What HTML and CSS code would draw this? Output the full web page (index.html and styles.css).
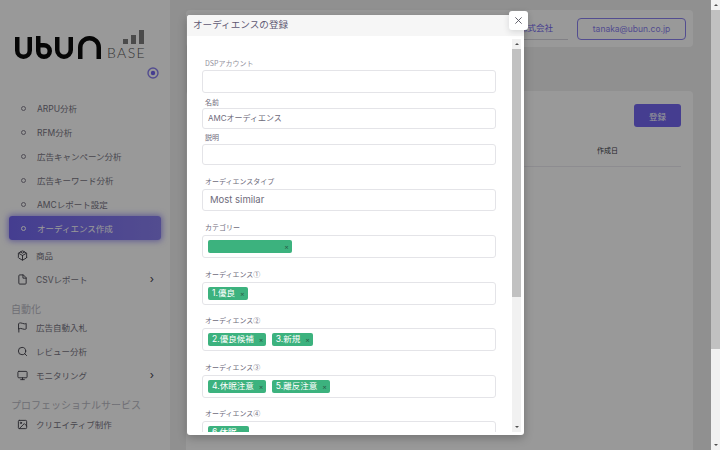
FILE: index.html
```html
<!DOCTYPE html>
<html lang="ja">
<head>
<meta charset="utf-8">
<title>オーディエンスの登録</title>
<link rel="stylesheet" href="styles.css">
</head>
<body>
<div class="page">
  <aside class="sidebar">
    <div class="brand">
      <svg class="logo" width="150" height="64" viewBox="0 0 150 64" aria-label="UBUN BASE">
        <g fill="none" stroke="#0a0a0a" stroke-width="4.500" stroke-linecap="butt">
          <path d="M17.250 37V50.500a6.250 6.250 0 0 0 12.500 0V37"/>
          <path d="M38.250 36V51a5.750 5.750 0 0 0 11.500 0a5.750 5.750 0 0 0-5.750-5.750H40"/>
          <path d="M57.250 37V50a6.750 6.750 0 0 0 13.500 0V37"/>
          <path d="M80.250 59V47.500a9.250 9.250 0 0 1 18.500 0V59"/>
        </g>
        <rect x="123" y="39" width="5" height="5" fill="#7d7d7d"/>
        <rect x="131" y="35" width="5" height="9" fill="#7d7d7d"/>
        <rect x="139" y="30" width="5" height="14" fill="#7d7d7d"/>
      </svg>
      <span class="base">BASE</span>
      <svg class="target" width="12" height="12" viewBox="0 0 12 12">
        <circle cx="6" cy="6" r="5" fill="none" stroke="#8a80f0" stroke-width="1.400"/>
        <circle cx="6" cy="6" r="2.200" fill="#7367f0"/>
      </svg>
    </div>
    <nav class="nav">
      <a class="item sub"><i class="dot"></i>ARPU分析</a>
      <a class="item sub"><i class="dot"></i>RFM分析</a>
      <a class="item sub"><i class="dot"></i>広告キャンペーン分析</a>
      <a class="item sub"><i class="dot"></i>広告キーワード分析</a>
      <a class="item sub"><i class="dot"></i>AMCレポート設定</a>
      <a class="item sub active"><i class="dot"></i>オーディエンス作成</a>
      <a class="item top">
        <svg class="ico" viewBox="0 0 24 24"><path d="M21 16V8a2 2 0 0 0-1-1.730l-7-4a2 2 0 0 0-2 0l-7 4A2 2 0 0 0 3 8v8a2 2 0 0 0 1 1.730l7 4a2 2 0 0 0 2 0l7-4A2 2 0 0 0 21 16z"/><path d="M7.500 4.200 12 7l4.500-2.800M3.300 7 12 12l8.700-5M12 22V12"/></svg>
        商品</a>
      <a class="item">
        <svg class="ico" viewBox="0 0 24 24"><path d="M13 2H6a2 2 0 0 0-2 2v16a2 2 0 0 0 2 2h12a2 2 0 0 0 2-2V9z"/><path d="M13 2v7h7"/></svg>
        CSVレポート<span class="chev">›</span></a>
      <div class="section">自動化</div>
      <a class="item">
        <svg class="ico" viewBox="0 0 24 24"><path d="M4 15s1-1 4-1 5 2 8 2 4-1 4-1V3s-1 1-4 1-5-2-8-2-4 1-4 1zM4 22v-7"/></svg>
        広告自動入札</a>
      <a class="item">
        <svg class="ico" viewBox="0 0 24 24"><circle cx="11" cy="11" r="8"/><path d="m21 21-4.300-4.300"/></svg>
        レビュー分析</a>
      <a class="item">
        <svg class="ico" viewBox="0 0 24 24"><rect x="2" y="3" width="20" height="14" rx="2"/><path d="M8 21h8M12 17v4"/></svg>
        モニタリング<span class="chev">›</span></a>
      <div class="section pro">プロフェッショナルサービス</div>
      <a class="item">
        <svg class="ico" viewBox="0 0 24 24"><rect x="3" y="3" width="18" height="18" rx="2"/><circle cx="8.500" cy="8.500" r="1.500"/><path d="m21 15-5-5L5 21"/></svg>
        クリエイティブ制作</a>
    </nav>
  </aside>
  <main class="main">
    <header class="topbar">
      <div class="company">UBUN株式会社</div>
      <div class="email">tanaka@ubun.co.jp</div>
    </header>
    <section class="card">
      <div class="card-actions"><button class="primary">登録</button></div>
      <div class="thead"><span>作成日</span></div>
    </section>
  </main>
  <div class="scrollbar page-bar">
    <span class="arrow up"></span>
    <span class="thumb"></span>
    <span class="rest"></span>
    <span class="arrow down"></span>
  </div>
</div>
<div class="overlay"></div>
<div class="modal">
  <button class="close" aria-label="閉じる">
    <svg width="9" height="9" viewBox="0 0 10 10"><path d="M1.500 1.500l7 7M8.500 1.500l-7 7" stroke="#55535f" stroke-width="1" fill="none"/></svg>
  </button>
  <div class="modal-head">オーディエンスの登録</div>
  <div class="modal-body">
    <form class="form">
      <div class="field field-a"><label>DSPアカウント</label><div class="box"></div></div>
      <div class="field field-b"><label>名前</label><div class="box">AMCオーディエンス</div></div>
      <div class="field field-c"><label>説明</label><div class="box"></div></div>
      <div class="field field-d"><label>オーディエンスタイプ</label><div class="box big">Most similar</div></div>
      <div class="field"><label>カテゴリー</label><div class="box chips"><span class="chip wide"><b></b><em>×</em></span></div></div>
      <div class="field"><label>オーディエンス①</label><div class="box chips"><span class="chip"><b>1.優良</b><em>×</em></span></div></div>
      <div class="field"><label>オーディエンス②</label><div class="box chips"><span class="chip"><b>2.優良候補</b><em>×</em></span><span class="chip"><b>3.新規</b><em>×</em></span></div></div>
      <div class="field"><label>オーディエンス③</label><div class="box chips"><span class="chip"><b>4.休眠注意</b><em>×</em></span><span class="chip"><b>5.離反注意</b><em>×</em></span></div></div>
      <div class="field"><label>オーディエンス④</label><div class="box chips"><span class="chip"><b>6.休眠</b><em>×</em></span></div></div>
    </form>
    <div class="scrollbar modal-bar">
      <span class="arrow up"></span>
      <span class="thumb"></span>
      <span class="rest"></span>
      <span class="arrow down"></span>
    </div>
  </div>
</div>
</body>
</html>
```
FILE: styles.css
```css
* { box-sizing: border-box; }
html, body { margin: 0; height: 450px; overflow: hidden; }
body {
  font-family: "Inter", "Noto Sans CJK JP", sans-serif;
  color: #6e6b7b;
  background: #f0f0f0;
}
.page { display: flex; height: 450px; }

/* sidebar */
.sidebar { width: 170px; flex: none; background: #fff; padding: 0 9px; }
.brand { position: relative; height: 96px; margin: 0 -9px; }
.logo { display: block; }
.base {
  position: absolute; left: 107px; top: 45px;
  font: 300 14px/15px "Lato", sans-serif; color: #555; letter-spacing: 1.400px;
}
.target { position: absolute; left: 147px; top: 67px; }
.nav { display: flex; flex-direction: column; }
.item {
  display: flex; align-items: center; height: 24px; padding-left: 9px;
  font-size: 8.500px; color: #787583; flex: none;
}
.item.top { margin-top: 3px; }
.item.active {
  background: linear-gradient(90deg, #7367f0, #8a80f0);
  color: #fff; border-radius: 3px;
  box-shadow: 0 0 6px 1px rgba(115, 103, 240, .7);
}
.dot {
  width: 5px; height: 5px; border: 1px solid #858290; border-radius: 50%;
  margin: 0 11px 0 3px; flex: none;
}
.active .dot { border-color: #fff; }
.ico {
  width: 11px; height: 11px; margin: 0 8px 0 -1px; flex: none;
  fill: none; stroke: #403e48; stroke-width: 2; stroke-linecap: round; stroke-linejoin: round;
}
.chev { margin-left: auto; margin-right: 7px; font-size: 11px; line-height: 1; color: #403e48; }
.section {
  height: 14px; line-height: 16px; margin: 10px 0 0 2px; font-size: 10px;
  color: #b9b9c3; white-space: nowrap;
}
.section.pro { margin-bottom: 1px; }

/* main */
.main { flex: 1; padding: 10px 18px 0 16px; min-width: 0; }
.topbar {
  display: flex; align-items: center; justify-content: flex-end; gap: 9px;
  height: 37px; background: #fff; border-radius: 4px; padding: 0 7px 0 0; margin-bottom: 44px;
}
.company {
  width: 110px; height: 22px; padding: 0 15px 0 0; text-align: right; font-size: 8.500px;
  line-height: 20px; color: #7367f0; border-bottom: 1px solid #d8d6de;
}
.email {
  width: 109px; height: 22px; line-height: 20px; text-align: center; font-size: 8.500px;
  color: #8a80f0; border: 1px solid #8a80f0; border-radius: 4px;
}
.card { background: #fff; border-radius: 4px; height: 400px; padding: 13px 12px; }
.card-actions { display: flex; justify-content: flex-end; }
.primary {
  width: 47px; height: 23px; border: 0; border-radius: 3px; background: #7367f0;
  color: #fff; font: 8.500px "Noto Sans CJK JP", sans-serif;
}
.thead {
  display: flex; justify-content: flex-end; height: 40px; padding: 14px 63px 0 0;
  border-bottom: 1px solid #ebe9f1; font-size: 7px; line-height: 20px; color: #403e48;
}

/* overlay + modal */
.overlay { position: absolute; inset: 0 9px 0 0; background: rgba(0, 0, 0, .4); }
.modal {
  position: absolute; left: 187px; top: 15px; width: 337px; height: 420px;
  background: #fff; border-radius: 3px; box-shadow: 0 3px 10px rgba(0, 0, 0, .25);
  display: flex; flex-direction: column;
}
.modal-head {
  height: 21px; flex: none; line-height: 20px; padding-left: 6px; background: #f6f6f6;
  font-size: 9.600px; color: #5e5873; border-radius: 3px 3px 0 0;
}
.close {
  position: absolute; right: -4px; top: -4px; width: 19px; height: 19px; padding: 0;
  border: 0; border-radius: 3px; background: #fff; box-shadow: 0 2px 6px rgba(34, 41, 47, .15);
  display: flex; align-items: center; justify-content: center;
}
.modal-body {
  flex: 1; display: flex; min-height: 0; margin: 3px 3px 3px 0;
}
.form { flex: 1; min-width: 0; overflow: hidden; padding: 19px 16px 0 15px; }
.field { margin-bottom: 10.500px; }
.field label {
  display: block; height: 10px; line-height: 11px; margin-bottom: 3px; padding-left: 3px;
  font: 7px/11px "Noto Sans CJK JP", sans-serif; color: #6e6b7b;
}
.box {
  height: 23px; border: 1px solid #e4e4e8; border-radius: 3px; background: #fff;
  padding: 0 5px; line-height: 18px; font-size: 8px; color: #6e6b7b;
}
.field-a { margin-bottom: 4px; }
.field-a label { margin-bottom: 2px; color: #92909c; }
.field-b { margin-bottom: 3px; }
.field-b label { margin-bottom: 1px; }
.field-c label { margin-bottom: 2px; }
.field-b .box, .field-c .box { height: 21px; }
.field-c { margin-bottom: 11px; }
.field-d { margin-bottom: 11px; }
.field-d .box { height: 22px; }
.big { font-size: 9.500px; padding-left: 7px; line-height: 19px; }
.chips { display: flex; align-items: center; gap: 5.500px; padding: 0 5px; }
.chip {
  display: inline-flex; align-items: center; justify-content: space-between; gap: 5px;
  height: 13px; padding: 0 3px 0 4px; background: #3cb27e; border-radius: 2px;
  color: #fff; font-size: 8.500px; line-height: 13px;
}
.chip b { font-weight: 400; white-space: nowrap; }
.chip em { font-style: normal; font-size: 7px; color: #2a5f48; }
.chip.wide { width: 84px; }

/* classic scrollbars */
.scrollbar { flex: none; display: flex; flex-direction: column; background: #f1f1f1; }
.modal-bar { width: 9px; }
.page-bar { width: 9px; height: 450px; }
.arrow { height: 10px; flex: none; display: flex; align-items: center; justify-content: center; }
.arrow::before { content: ""; border: 2.500px solid transparent; }
.arrow.up::before { border-bottom-color: #505050; border-top-width: 0; }
.arrow.down::before { border-top-color: #505050; border-bottom-width: 0; }
.thumb { background: #c1c1c1; flex: none; }
.rest { flex: 1; }
.modal-bar .thumb { height: 248px; }
.page-bar .thumb { height: 339px; }
```
